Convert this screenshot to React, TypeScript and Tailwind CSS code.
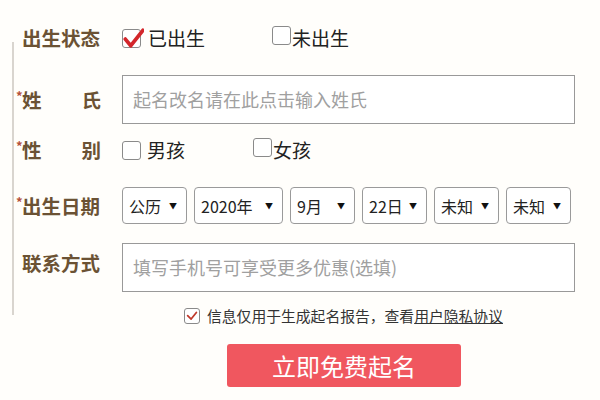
import React from 'react';

const font = { fontFamily: '"Noto Sans CJK SC", "Noto Sans", sans-serif' };

function Box({ checked = false, size = 'lg' }: { checked?: boolean; size?: 'lg' | 'sm' }) {
    const dim = size === 'lg' ? 'w-[19px] h-[19px]' : 'w-[16px] h-[16px]';
    return (
        <span className={`relative inline-block shrink-0 ${dim} border border-[#8a8a8a] rounded-[3px] bg-white`}>
            {checked && size === 'lg' && (
                <svg viewBox="0 0 20 20" className="absolute -left-[1px] -top-[3px] w-[22px] h-[22px]">
                    <path d="M3 11 L8 17 L19 3" fill="none" stroke="#d3262b" strokeWidth="3.4" strokeLinecap="round" strokeLinejoin="round" />
                </svg>
            )}
            {checked && size === 'sm' && (
                <svg viewBox="0 0 16 16" className="absolute left-0 top-0 w-[14px] h-[14px]">
                    <path d="M3 7.5 L7 11.5 L13 4" fill="none" stroke="#c0392b" strokeWidth="2" strokeLinecap="round" strokeLinejoin="round" />
                </svg>
            )}
        </span>
    );
}

function Label({ text, star = false, spread = false, className = '' }: { text: string; star?: boolean; spread?: boolean; className?: string }) {
    return (
        <div className={`relative w-[89px] pl-[9px] shrink-0 ${className}`}>
            {star && <span className="absolute left-[3px] top-[-1px] text-[13px] leading-none text-[#b5513a] font-bold">*</span>}
            <div className={`flex text-[19.5px] font-bold text-[#6b5234] leading-none ${spread ? 'justify-between pr-[1px]' : ''}`}>
                {spread ? text.split('').map((c, i) => <span key={i}>{c}</span>) : text}
            </div>
        </div>
    );
}

function Pick({ text, w }: { text: string; w: string }) {
    return (
        <div className={`${w} h-[37px] flex items-center justify-between pl-[6px] pr-[9px] border border-[#9a9a9a] rounded-[4px] bg-white text-[16px] text-[#222]`}>
            <span>{text}</span>
            <span className="text-[8px] text-[#111]">▼</span>
        </div>
    );
}

export default function App() {
    return (
        <div className="w-[600px] h-[400px] bg-[#fffefb] flex overflow-hidden" style={font}>
            <div className="w-[12px] shrink-0" />
            <div className="w-[2px] shrink-0 mt-[42px] h-[273px] bg-[#d9d5cf]" />

            <div className="flex flex-col pt-[20px] -ml-[1px]">
                {/* 出生状态 */}
                <div className="h-[36px] flex items-center">
                    <Label text="出生状态" />
                    <div className="ml-[20px] flex items-center">
                        <Box checked />
                        <span className="ml-[7px] text-[19px] text-[#222]">已出生</span>
                        <span className="ml-[67px]"><Box /></span>
                        <span className="ml-[1px] text-[19px] text-[#222]">未出生</span>
                    </div>
                </div>

                {/* 姓氏 */}
                <div className="mt-[19px] flex items-center">
                    <Label text="姓氏" star spread />
                    <div className="ml-[20px] w-[453px] h-[49px] border-[1.5px] border-[#999] bg-white flex items-center pl-[10px] text-[18px] text-[#a0a0a0]">
                        起名改名请在此点击输入姓氏
                    </div>
                </div>

                {/* 性别 */}
                <div className="mt-[8px] h-[36px] flex items-center">
                    <Label text="性别" star spread />
                    <div className="ml-[20px] flex items-center">
                        <Box />
                        <span className="ml-[6px] text-[19px] text-[#222]">男孩</span>
                        <span className="ml-[68px]"><Box /></span>
                        <span className="ml-[1px] text-[19px] text-[#222]">女孩</span>
                    </div>
                </div>

                {/* 出生日期 */}
                <div className="mt-[19px] flex items-center">
                    <Label text="出生日期" star />
                    <div className="ml-[20px] flex gap-[7px]">
                        <Pick text="公历" w="w-[65px]" />
                        <Pick text="2020年" w="w-[89px]" />
                        <Pick text="9月" w="w-[65px]" />
                        <Pick text="22日" w="w-[65px]" />
                        <Pick text="未知" w="w-[65px]" />
                        <Pick text="未知" w="w-[65px]" />
                    </div>
                </div>

                {/* 联系方式 */}
                <div className="mt-[19px] flex items-center">
                    <Label text="联系方式" className="mb-[10px]" />
                    <div className="ml-[20px] w-[453px] h-[49px] border-[1.5px] border-[#999] bg-white flex items-center pl-[10px] text-[18px] text-[#a0a0a0]">
                        填写手机号可享受更多优惠(选填)
                    </div>
                </div>

                {/* 协议 */}
                <div className="mt-[15px] h-[18px] flex items-center pl-[171px]">
                    <Box checked size="sm" />
                    <span className="ml-[7px] text-[14.8px] text-[#333] leading-none">
                        信息仅用于生成起名报告，查看<span className="underline">用户隐私协议</span>
                    </span>
                </div>

                {/* 按钮 */}
                <div className="mt-[19px] pl-[214px]">
                    <button className="w-[234px] h-[43px] bg-[#f0575f] rounded-[3px] text-white text-[24px] leading-none">
                        立即免费起名
                    </button>
                </div>
            </div>
        </div>
    );
}
